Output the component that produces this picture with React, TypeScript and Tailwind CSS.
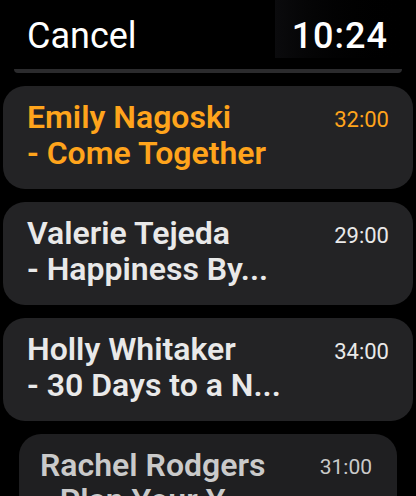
import React from "react";

type Episode = { title: string; subtitle: string; time: string; active?: boolean };

const episodes: Episode[] = [
  { title: "Emily Nagoski", subtitle: "- Come Together", time: "32:00", active: true },
  { title: "Valerie Tejeda", subtitle: "- Happiness By...", time: "29:00" },
  { title: "Holly Whitaker", subtitle: "- 30 Days to a N...", time: "34:00" },
];

function EpisodeCard({ ep }: { ep: Episode }) {
  const color = ep.active ? "text-[#ffa41c]" : "text-[#e9e9e9]";
  return (
    <div className="mx-[3px] h-[103px] rounded-[22px] bg-[#232325] px-[24px] pt-[13px]">
      <div className="flex items-start justify-between">
        <div className={`${color} text-[32px] font-semibold leading-[36px]`}>
          <div>{ep.title}</div>
          <div>{ep.subtitle}</div>
        </div>
        <div className={`${color} pt-[7px] text-[22px] leading-[28px]`}>{ep.time}</div>
      </div>
    </div>
  );
}

export default function App() {
  return (
    <div className="h-[496px] w-[416px] overflow-hidden bg-black font-['Roboto',sans-serif]">
      <div className="flex h-[58px] items-stretch justify-between">
        <span className="pl-[27px] pt-[18px] text-[36px] leading-[36px] text-white">Cancel</span>
        <span className="w-[141px] bg-gradient-to-r from-[#0b0b0d] to-black pr-[28px] pt-[18px] text-right text-[36px] font-medium leading-[36px] tracking-[1px] text-white">
          10:24
        </span>
      </div>
      <div className="mx-[14px] mt-[11px] h-[4px] rounded-b-full bg-[#2b2b2d]" />
      <div className="mt-[13px] flex flex-col gap-[13px]">
        {episodes.map((ep) => (
          <EpisodeCard key={ep.title} ep={ep} />
        ))}
        <div className="mx-[19px] h-[110px] rounded-[22px] bg-[#1f1f21] pl-[21px] pr-[25px] pt-[14px]">
          <div className="flex items-start justify-between">
            <div className="text-[32px] font-semibold leading-[35px] text-[#cacaca]">
              <div>Rachel Rodgers</div>
              <div>- Plan Your Y...</div>
            </div>
            <div className="pt-[6px] text-[21px] leading-[26px] text-[#cacaca]">31:00</div>
          </div>
        </div>
      </div>
    </div>
  );
}
